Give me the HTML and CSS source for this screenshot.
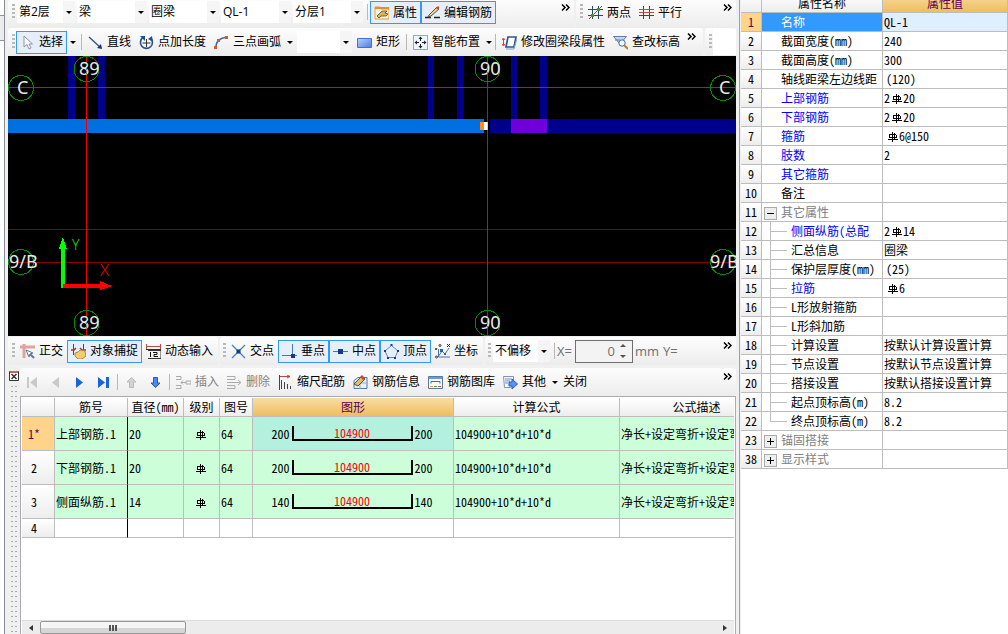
FILE: index.html
```html
<!DOCTYPE html>
<html lang="zh-CN">
<head>
<meta charset="utf-8">
<title>圈梁 - QL-1</title>
<link rel="stylesheet" href="styles.css">
</head>
<body>
<svg class="defs" aria-hidden="true">
  <symbol id="rebar" viewBox="0 0 10 10"><path d="M4.500 0v10M6.500 1v7M1.500 2v4M8.500 3v3M1 2.500h7M1 5.500h8M0 7.500h10" fill="none" stroke="#000" shape-rendering="crispEdges"/></symbol>
  <symbol id="more" viewBox="0 0 9 7"><path d="M1 .5l3 3-3 3M5 .5l3 3-3 3" fill="none" stroke="#000" stroke-width="1.500"/></symbol>
</svg>
<div class="app">
  <aside class="edge"><div class="edge-tab"></div></aside>
  <main class="work">
    <div class="row">
      <div class="bar top grow">
        <i class="grip"></i>
        <label class="combo first"><select aria-label="楼层"><option>第2层</option></select></label>
        <label class="combo"><select aria-label="构件类型"><option>梁</option></select></label>
        <label class="combo"><select aria-label="构件"><option>圈梁</option></select></label>
        <label class="combo"><select aria-label="名称"><option>QL-1</option></select></label>
        <label class="combo"><select aria-label="分层"><option>分层1</option></select></label>
        <i class="sep"></i>
        <div class="group">
        <button class="tool on"><svg viewBox="0 0 15 15"><path d="M1 2h5l1 2h8v10H1z" fill="#fff3dc" stroke="#e59a3c"/><path d="M1 3h14" stroke="#f08a28" stroke-width="2"/><path d="M3 11l3-3 2-2 5 0-2 2 3 1-2 2H7l-2 2z" fill="#d8b45c" stroke="#5f4a22" stroke-width=".8"/></svg>属性</button>
        <button class="tool on"><svg viewBox="0 0 15 15"><path d="M0 12.500h6M9 12.500h6" stroke="#222" stroke-width="1.500"/><path d="M4 10L12 2l2 2-8 7-3 1z" fill="#f0d28a" stroke="#555"/><path d="M11 3l2-2 1.500 1.500-2 2z" fill="#c05038"/></svg>编辑钢筋</button>
        </div>
        <button class="more" aria-label="更多"><svg><use href="#more"/></svg></button>
      </div>
      <div class="bar top axis">
        <i class="grip"></i>
        <div class="group">
        <button class="tool"><svg viewBox="0 0 15 15"><path d="M4.500 1v13M10.500 1v13M0 4.500h15M0 10.500h15" stroke="#33456d"/><path d="M1 14L14 1" stroke="#a83c32"/><path d="M3 9h3v3H3zM9 3h3v3H9z" fill="#3b962c"/></svg>两点</button>
        <button class="tool"><svg viewBox="0 0 15 15"><path d="M4.500 1v13M10.500 1v13M0 10.500h15" stroke="#33456d"/><path d="M0 4.500h15M0 7.500h15" stroke="#bd4a45"/></svg>平行</button>
        </div>
        <button class="more" aria-label="更多"><svg><use href="#more"/></svg></button>
      </div>
    </div>
    <div class="row">
      <div class="bar draw grow">
        <i class="grip"></i>
        <button class="tool on"><svg viewBox="0 0 15 15"><path d="M4 1v11l3-2.500 2 4.500 2-1-2-4h3.500z" fill="#fff" stroke="#8b93a5"/></svg>选择</button>
        <button class="drop" aria-label="选择方式"></button>
        <i class="sep"></i>
        <div class="group">
        <button class="tool"><svg viewBox="0 0 15 15"><path d="M1 2l12 11" stroke="#2d4f86" stroke-width="1.300"/><path d="M14 14l-1-5-4 4z" fill="#173b76"/></svg>直线</button>
        <button class="tool"><svg viewBox="0 0 15 15"><path d="M4 2.500a6 6 0 1 0 7.500.5" fill="none" stroke="#24508f" stroke-width="1.600"/><path d="M1 1h5v5zM13 1l1 6-5-3z" fill="#24508f"/><path d="M7.500 4v8M3.500 8h8" stroke="#333"/></svg>点加长度</button>
        <button class="tool"><svg viewBox="0 0 15 15"><path d="M2 13Q1 4 13 2" fill="none" stroke="#3566b1" stroke-width="1.300"/><path d="M0 11h3v3H0zM3 4h3v3H3zM11 1h3v3h-3z" fill="#d35938"/></svg>三点画弧</button>
        <button class="drop" aria-label="画弧方式"></button>
        </div>
        <label class="combo small"><select aria-label="参数"><option></option></select></label>
        <button class="tool"><svg viewBox="0 0 15 15"><defs><linearGradient id="blue" x2="1" y2="1"><stop stop-color="#b8d2ff"/><stop offset="1" stop-color="#477de4"/></linearGradient></defs><path d="M.5 3.500h14v9H.5z" fill="url(#blue)" stroke="#4473c7"/></svg>矩形</button>
        <i class="sep"></i>
        <div class="group">
        <button class="tool"><svg viewBox="0 0 15 15"><path d="M.5.5h14v14H.5z" fill="#edf5ff" stroke="#3b5b8d" stroke-dasharray="1 1"/><path d="M7.500 2v4M7.500 9v4M2 7.500h4M9 7.500h4" stroke="#222"/><path d="M5.500 4l2-2.500 2 2.500zM5.500 11l2 2.500 2-2.500zM4 5.500L1.500 7.500 4 9.500zM11 5.500l2.500 2-2.500 2z" fill="#222"/></svg>智能布置</button>
        <button class="drop" aria-label="布置方式"></button>
        </div>
        <i class="sep"></i>
        <div class="group">
        <button class="tool"><svg viewBox="0 0 15 15"><path d="M6 2h8l-2 10H4z" fill="#fff" stroke="#315687" stroke-width="1.700"/><path d="M4 14h8l3-11" fill="none" stroke="#7aa2d3"/><path d="M1.500 4v6M0 5l1.500-2L3 5M0 9l1.500 2L3 9" fill="none" stroke="#d04830"/></svg>修改圈梁段属性</button>
        <button class="tool"><svg viewBox="0 0 15 15"><path d="M.5 1.500h13L7 9zM2 5h5" fill="#c3d7f1" stroke="#5b7faf"/><circle cx="9" cy="8" r="3.200" fill="#eef7ff" stroke="#426da2"/><path d="M11 10l4 4" stroke="#bf7832" stroke-width="2"/></svg>查改标高</button>
        </div>
        <button class="more near" aria-label="更多"><svg><use href="#more"/></svg></button>
      </div>
      <div class="bar draw stub"><i class="grip"></i><span class="blank"></span></div>
    </div>

    <svg class="canvas" role="img" aria-label="轴网图">
      <g fill="#00008b"><path d="M60 0h7v63h-7zM90 0h7v63h-7zM420 0h6v63h-6zM449 0h7v63h-7zM503 0h6v63h-6zM532 0h7v63h-7z"/><rect x="482" y="63" width="100%" height="14"/></g>
      <path d="M0 63h476v14H0z" fill="#0070e0"/>
      <path d="M503 63h36v14h-36z" fill="#6f00dc"/>
      <g fill="#8b0000"><rect y="173" width="100%" height="1"/><rect y="206" width="100%" height="1"/></g>
      <g fill="#f00000"><rect y="31" width="100%" height="1"/><rect x="78" width="1" height="280"/><rect x="479" width="1" height="280"/></g>
      <path d="M472 66h4v8h-4z" fill="#ff8c20"/><path d="M476 66h3v8h-3z" fill="#fff"/><path d="M479 66h1v8h-1z" fill="#6ff"/>
      <g fill="none" stroke="#008c00">
        <circle cx="78.500" cy="13" r="12.500"/><circle cx="479.500" cy="13" r="12.500"/><circle cx="78.500" cy="267" r="12.500"/><circle cx="479.500" cy="267" r="12.500"/>
        <circle cx="13" cy="32" r="12.500"/><circle cx="715" cy="32" r="12.500"/><circle cx="13" cy="206" r="12.500"/><circle cx="715" cy="206" r="12.500"/>
      </g>
      <g class="axis-text">
        <text x="71" y="19">89</text><text x="472" y="19">90</text><text x="71" y="273">89</text><text x="472" y="273">90</text>
        <text x="9" y="38">C</text><text x="711" y="38">C</text><text x="1" y="212">9/B</text><text x="702" y="212">9/B</text>
      </g>
      <path d="M78.500 8v11M479.500 8v11M78.500 262v11M479.500 262v11" stroke="#00b4b4" stroke-dasharray="2 2"/>
      <path d="M53 232v-39h-2l4-12 4 12h-2v39z" fill="#0f0"/>
      <path d="M55 228h37v-3l12 5-12 4v-2H55z" fill="#f00"/>
      <text class="axis-y" x="64" y="194">Y</text><text class="axis-x" x="92" y="220">X</text>
    </svg>

    <div class="row snap-row">
      <div class="bar snap ortho">
        <i class="grip"></i>
        <div class="group">
        <button class="tool"><svg viewBox="0 0 15 15"><path d="M0 3h15M4 0v14" stroke="#dda5a0" stroke-width="3"/><path d="M6 6l3 7 1-3 3-1z" fill="#fff" stroke="#60789a"/><path d="M10 10l4 4" stroke="#60789a" stroke-width="2"/></svg>正交</button>
        <button class="tool on"><svg viewBox="0 0 15 15"><path d="M2.500 0v11M12.500 0v8" stroke="#77352e"/><path d="M0 6h3l2-2M15 6h-4L9 4" fill="none" stroke="#9d3b32" stroke-width="1.500"/><path d="M4 9l3-1 2-2 5 1 1 5-4 3H7l-3-3z" fill="#f0cd71" stroke="#b28a38"/></svg>对象捕捉</button>
        <button class="tool"><svg viewBox="0 0 15 15"><path d="M.5 0v5M14.500 0v5M0 2.500h15" stroke="#b64e48"/><path d="M2 6.500h13v8H2M0 5.500h15" fill="none" stroke="#333"/><path d="M4.500 8v5M7 8.500h4v2H8v2h4" fill="none" stroke="#111"/></svg>动态输入</button>
        </div>
      </div>
      <div class="bar snap points">
        <i class="grip"></i>
        <div class="group">
        <button class="tool"><svg viewBox="0 0 15 15"><path d="M1 1l13 13M14 1L1 14" stroke="#4a83c3" stroke-width="1.300"/><path d="M5.500 5.500h4v4h-4z" fill="#123d85"/></svg>交点</button>
        <button class="tool on"><svg viewBox="0 0 15 15"><path d="M10.500 0v13M0 11.500h15" stroke="#4778b5"/><path d="M9 10h4v4H9z" fill="#123d85"/></svg>垂点</button>
        <button class="tool on"><svg viewBox="0 0 15 15"><path d="M0 7.500h15" stroke="#4778b5"/><path d="M5 5h5v5H5z" fill="#123d85"/></svg>中点</button>
        <button class="tool on"><svg viewBox="0 0 15 15"><path d="M7.500 1.500L14 7l-3 6.500H4L1 7z" fill="none" stroke="#5f8bc0"/><path d="M6.500 0h2v2h-2zM0 6h2v2H0zM13 6h2v2h-2zM3 13h2v2H3zM10 13h2v2h-2z" fill="#123d85"/></svg>顶点</button>
        <button class="tool"><svg viewBox="0 0 15 15"><path d="M3.500 5v8H15M3 13l4-6 3 3 4-6" fill="none" stroke="#4a73a5"/><path d="M5 5h3v3H5zM9 9h2v2H9z" fill="#315d99"/><path d="M0 4l1 2 1-2M12 0l3 3M15 0l-3 3" fill="none" stroke="#333"/><circle cx="5" cy="1.500" r="1" fill="none" stroke="#333"/><circle cx="1.500" cy="13" r="1" fill="none" stroke="#333"/></svg>坐标</button>
        </div>
      </div>
      <div class="bar snap offset grow">
        <i class="grip"></i>
        <label class="combo offset-select"><select aria-label="偏移方式"><option>不偏移</option></select></label>
        <i class="sep"></i>
        <label class="coord" for="dx">X=</label>
        <span class="spin"><input id="dx" type="text" value="0"><span class="steps"><button class="up" aria-label="增加"></button><button class="down" aria-label="减少"></button></span></span>
        <span class="coord">mm</span><span class="coord">Y=</span>
        <button class="more" aria-label="更多"><svg><use href="#more"/></svg></button>
      </div>
    </div>

    <section class="dock">
      <div class="dock-handle">
        <button class="dock-close" aria-label="关闭面板"><svg viewBox="0 0 10 10"><path d="M.5.5h9v9h-9z" fill="#fff" stroke="#333"/><path d="M1 1h8" stroke="#c06a5c" stroke-width="2"/><path d="M2.500 3l5 5M7.500 3l-5 5" stroke="#333" stroke-width="1.500"/></svg></button>
        <i class="dots"></i>
      </div>
      <div class="dock-body">
        <div class="bar rebar-bar">
          <div class="group nav">
          <button class="tool" aria-label="首条"><svg viewBox="0 0 15 15"><path d="M3 2h2v11H3zM13 2v11L6 7.500z" fill="#c9c9c9"/></svg></button>
          <button class="tool" aria-label="上一条"><svg viewBox="0 0 15 15"><path d="M11 2v11L4 7.500z" fill="#c9c9c9"/></svg></button>
          <button class="tool" aria-label="下一条"><svg viewBox="0 0 15 15"><path d="M4 2v11l7-5.500z" fill="#1c62dc"/></svg></button>
          <button class="tool" aria-label="末条"><svg viewBox="0 0 15 15"><path d="M2 2v11l7-5.500zM10 2h3v11h-3z" fill="#1c62dc"/></svg></button>
          </div>
          <i class="sep"></i>
          <div class="group nav">
          <button class="tool" aria-label="上移"><svg viewBox="0 0 15 15"><path d="M7.500 2.500L12 7H9.500v5.500h-4V7H3z" fill="#d2d2d2" stroke="#bababa"/></svg></button>
          <button class="tool" aria-label="下移"><svg viewBox="0 0 15 15"><path d="M7.500 12.500L12 8H9.500V2.500h-4V8H3z" fill="#4c88ef" stroke="#2458be"/></svg></button>
          </div>
          <i class="sep"></i>
          <div class="group">
          <button class="tool off"><svg viewBox="0 0 15 15"><path d="M0 1.500h5v3H0M0 10.500h5v3H0M5 7.500h5M7 5.500l-2 2 2 2M10 6h5v3h-5z" fill="none" stroke="#aaa"/></svg>插入</button>
          <button class="tool off"><svg viewBox="0 0 15 15"><path d="M0 1.500h8v3H0M0 10.500h8v3H0M0 7.500h13M11 5l3 2.500-3 2.500" fill="none" stroke="#aaa"/></svg>删除</button>
          <button class="tool"><svg viewBox="0 0 15 15"><path d="M1 1.500h11M9 0l3 1.500L9 3" fill="none" stroke="#b34b40"/><path d="M1.500 0v15M3.500 5v9M6.500 7v7M9.500 9v5M12.500 11v3" stroke="#444"/></svg>缩尺配筋</button>
          <button class="tool"><svg viewBox="0 0 15 15"><path d="M5 2.500h9v11H1v-8z" fill="#e6effc" stroke="#5578ae"/><path d="M1 8h13M7 5v9" stroke="#8fabd3"/><path d="M1 9l8-8 3 3-7 7z" fill="#ddc16a" stroke="#5d4b29"/><path d="M7 2l2-2 3 3-2 2z" fill="#be4c37"/></svg>钢筋信息</button>
          <button class="tool"><svg viewBox="0 0 15 15"><path d="M.5 1.500h14v12H.5z" fill="#f5f9ff" stroke="#5679a9"/><path d="M1 3h13" stroke="#6f9bd0" stroke-width="2"/><path d="M3 8.500v-2h9v2" fill="none" stroke="#476898"/><path d="M2 11.500h3" stroke="#df9c37"/><path d="M6 11.500h3" stroke="#46a34a"/><path d="M10 11.500h3" stroke="#cc5449"/></svg>钢筋图库</button>
          <button class="tool"><svg viewBox="0 0 15 15"><path d="M.5 1.500h10v8l-3 3h-6z" fill="#f5f9ff" stroke="#7e94b4"/><path d="M2 4h7M2 6h5M2 8h3" stroke="#7192be"/><path d="M6 7h3V4l5.500 5L9 14v-3H6z" fill="#5b93ed" stroke="#2a5cb5"/></svg>其他</button>
          <button class="drop" aria-label="其他操作"></button>
          <button class="tool close">关闭</button>
          </div>
          <button class="more" aria-label="更多"><svg><use href="#more"/></svg></button>
        </div>
        <div class="sheet">
          <div class="sheet-view">
          <table class="rebars">
            <colgroup><col class="c-id"><col class="c-name"><col class="c-dia"><col class="c-level"><col class="c-fig"><col class="c-shape"><col class="c-formula"><col class="c-desc"></colgroup>
            <thead><tr><th></th><th>筋号</th><th>直径(mm)</th><th>级别</th><th>图号</th><th class="hot">图形</th><th>计算公式</th><th>公式描述</th></tr></thead>
            <tbody>
            <tr><th class="active">1*</th><td>上部钢筋.1</td><td>20</td><td class="mid"><svg class="rb"><use href="#rebar"/></svg></td><td>64</td><td class="figure picked"><div class="shape"><span>200</span><b>104900</b><span>200</span></div></td><td>104900+10*d+10*d</td><td>净长+设定弯折+设定弯</td></tr>
            <tr><th>2</th><td>下部钢筋.1</td><td>20</td><td class="mid"><svg class="rb"><use href="#rebar"/></svg></td><td>64</td><td class="figure"><div class="shape"><span>200</span><b>104900</b><span>200</span></div></td><td>104900+10*d+10*d</td><td>净长+设定弯折+设定弯</td></tr>
            <tr><th>3</th><td>侧面纵筋.1</td><td>14</td><td class="mid"><svg class="rb"><use href="#rebar"/></svg></td><td>64</td><td class="figure"><div class="shape"><span>140</span><b>104900</b><span>140</span></div></td><td>104900+10*d+10*d</td><td>净长+设定弯折+设定弯</td></tr>
            <tr class="empty"><th>4</th><td></td><td></td><td></td><td></td><td></td><td></td><td></td></tr>
            </tbody>
          </table>
          </div>
          <div class="scroll"><button class="left" aria-label="向左滚动"></button><div class="track"><div class="thumb"><i></i></div></div><button class="right" aria-label="向右滚动"></button></div>
        </div>
      </div>
    </section>
  </main>

  <aside class="props">
    <table>
      <colgroup><col class="p-id"><col class="p-name"><col></colgroup>
      <thead><tr><th></th><th>属性名称</th><th class="hot">属性值</th></tr></thead>
      <tbody>
      <tr class="selected"><th>1</th><td>名称</td><td>QL-1</td></tr>
      <tr><th>2</th><td>截面宽度(mm)</td><td>240</td></tr>
      <tr><th>3</th><td>截面高度(mm)</td><td>300</td></tr>
      <tr><th>4</th><td>轴线距梁左边线距</td><td class="inset">(120)</td></tr>
      <tr class="link"><th>5</th><td>上部钢筋</td><td>2<svg class="rb"><use href="#rebar"/></svg>20</td></tr>
      <tr class="link"><th>6</th><td>下部钢筋</td><td>2<svg class="rb"><use href="#rebar"/></svg>20</td></tr>
      <tr class="link"><th>7</th><td>箍筋</td><td class="inset"><svg class="rb"><use href="#rebar"/></svg>6@150</td></tr>
      <tr class="link"><th>8</th><td>肢数</td><td>2</td></tr>
      <tr class="link"><th>9</th><td>其它箍筋</td><td></td></tr>
      <tr><th>10</th><td>备注</td><td></td></tr>
      <tr class="fold"><th>11</th><td><button class="toggle open" aria-label="收起"></button>其它属性</td><td></td></tr>
      <tr class="child link"><th>12</th><td>侧面纵筋(总配</td><td>2<svg class="rb"><use href="#rebar"/></svg>14</td></tr>
      <tr class="child"><th>13</th><td>汇总信息</td><td>圈梁</td></tr>
      <tr class="child"><th>14</th><td>保护层厚度(mm)</td><td class="inset">(25)</td></tr>
      <tr class="child link"><th>15</th><td>拉筋</td><td class="inset"><svg class="rb"><use href="#rebar"/></svg>6</td></tr>
      <tr class="child"><th>16</th><td>L形放射箍筋</td><td></td></tr>
      <tr class="child"><th>17</th><td>L形斜加筋</td><td></td></tr>
      <tr class="child"><th>18</th><td>计算设置</td><td>按默认计算设置计算</td></tr>
      <tr class="child"><th>19</th><td>节点设置</td><td>按默认节点设置计算</td></tr>
      <tr class="child"><th>20</th><td>搭接设置</td><td>按默认搭接设置计算</td></tr>
      <tr class="child"><th>21</th><td>起点顶标高(m)</td><td>8.2</td></tr>
      <tr class="child last"><th>22</th><td>终点顶标高(m)</td><td>8.2</td></tr>
      <tr class="fold"><th>23</th><td><button class="toggle" aria-label="展开"></button>锚固搭接</td><td></td></tr>
      <tr class="fold"><th>38</th><td><button class="toggle" aria-label="展开"></button>显示样式</td><td></td></tr>
      </tbody>
    </table>
  </aside>
</div>
</body>
</html>
```
FILE: styles.css
```css
* { box-sizing: border-box; }
body { margin: 0; background: #f0f0f0; color: #000; font: 12px/16px "Open Sans", "Noto Sans CJK SC", sans-serif; }
button, select, input { font: inherit; color: inherit; }
button { border: 0; padding: 0; background: none; }
.defs { position: absolute; width: 0; height: 0; }
.app { display: grid; grid-template-columns: 8px minmax(0, 1fr) 268px; height: 100vh; overflow: hidden; }

.edge { padding-top: 15px; margin-right: 3px; background: #fff; border-right: 1px solid #868b94; }
.edge-tab { height: 26px; background: #ececec; border: solid #8e929a; border-width: 1px 0; }
.work { display: flex; flex-direction: column; min-width: 0; padding-right: 3px; border-right: 1px solid #a0a0a0; }

/* toolbars */
.row { display: flex; gap: 2px; }
.bar { display: flex; align-items: center; height: 28px; background: linear-gradient(#fdfdfd, #ececec); border-radius: 3px; white-space: nowrap; }
.grow { flex: 1; min-width: 0; }
.group { display: flex; align-items: center; }
.top { align-items: flex-start; padding-top: 1px; }
.grip { flex: none; width: 3px; height: 16px; margin: 0 2px 0 4px; background: repeating-linear-gradient(#b9b9b9 0 2px, transparent 2px 4px); }
.top .grip { margin-top: 3px; }
.sep { flex: none; width: 1px; height: 16px; background: #b8b8b8; margin: 0 2px; }
.top .sep { margin: 3px 2px 0; }
.combo { position: relative; flex: none; width: 70px; height: 22px; margin-right: 2px; background: linear-gradient(90deg, #fff calc(100% - 12px), #f5f5f5 0); }
.combo::after { content: ""; position: absolute; right: 3px; top: 10px; border: 3px solid transparent; border-top-color: #000; border-bottom: 0; pointer-events: none; }
.combo select { appearance: none; width: 100%; height: 100%; border: 0; padding: 0 14px 0 2px; background: none; outline: 0; }
.combo.first { width: 58px; }
.tool { display: flex; flex: none; align-items: center; gap: 4px; height: 23px; padding: 0 3px; border: 1px solid transparent; }
.tool svg { width: 15px; height: 15px; }
.tool.on { background: #e5eef9; border-color: #3399ff; }
.tool.off { color: #838383; }
.drop { flex: none; width: 9px; height: 20px; }
.drop::after { content: ""; display: block; width: 0; margin: 0 auto; border: 3px solid transparent; border-top-color: #000; border-bottom: 0; }
.more { flex: none; width: 9px; height: 12px; margin: 0 4px 12px auto; line-height: 0; }
.more svg { width: 9px; height: 7px; }
.axis { width: 160px; }
.axis .grip { margin-right: 1px; }
.more.near { margin-left: 3px; margin-right: 0; }
.draw .grip { margin-right: 1px; }
.draw > .drop { margin: 0 2px 0 1px; }
.combo.small { width: 55px; margin: 0 1px 0 3px; }
.stub { width: 31px; }
.blank { flex: 1; height: 26px; background: #fff; }

.canvas { display: block; flex: none; width: 100%; height: 280px; background: #000; shape-rendering: crispEdges; }
.axis-text { font: 18px "Noto Sans", sans-serif; fill: #e8e8e8; }
.axis-y { font: 300 14px "Open Sans", sans-serif; fill: #0f0; }
.axis-x { font: 300 17px "Open Sans", sans-serif; fill: #f00; }

.snap-row { padding: 1px 0; }
.snap .grip { margin-right: 0; }
.snap.ortho { width: 210px; }
.ortho .grip { margin-right: 1px; }
.points { width: 263px; }
.points .grip { margin: 0 1px 0 3px; }
.offset .grip { margin: 0 2px 0 3px; }
.offset-select { width: 57px; }
.coord { color: #707070; font-size: 13px; margin-right: 4px; }
.spin { display: flex; flex: none; width: 58px; height: 23px; margin: 0 2px 0 -1px; border: 1px solid #707070; background: #f3f3f3; }
.spin input { width: 39px; border: 0; padding: 0; background: none; color: #707070; text-align: right; font-size: 13px; }
.steps { display: flex; flex: 1; flex-direction: column; align-items: center; justify-content: space-around; }
.steps button { border: 3px solid transparent; width: 0; height: 0; }
.steps .up { border-bottom-color: #555; border-top: 0; }
.steps .down { border-top-color: #555; border-bottom: 0; }

/* rebar editor */
.dock { display: flex; flex: 1; min-height: 0; padding-top: 2px; }
.dock-handle { display: flex; flex-direction: column; width: 12px; padding-top: 2px; }
.dock-close { width: 10px; height: 11px; margin-left: 1px; line-height: 0; }
.dock-close svg { width: 10px; height: 10px; }
.dots { flex: 1; width: 8px; margin: 3px 0 0 2px; background: radial-gradient(circle, #aaa 1px, transparent 1px) 0 0 / 4px 5px; }
.dock-body { display: flex; flex: 1; flex-direction: column; min-width: 0; }
.rebar-bar .nav { gap: 1px; }
.sheet { display: flex; flex: 1; flex-direction: column; min-height: 0; border: 1px solid #a9abb2; border-bottom: 0; background: #fff; padding: 1px 1px 0; }
.sheet-view { flex: 1; min-height: 0; overflow: hidden; }
table { table-layout: fixed; border-collapse: separate; border-spacing: 0; font: 12px/16px "Noto Sans Mono CJK SC", "Noto Sans CJK SC", monospace; white-space: nowrap; }
th, td { height: 19px; padding: 0; border: solid #bdbdbd; border-width: 0 1px 1px 0; overflow: hidden; font-weight: 400; text-align: left; }
th { background: linear-gradient(#fff, #ededed); text-align: center; }
th.hot { background: linear-gradient(#f9dca4, #f0bd5c); color: #5a0050; }
.rebars { width: 752px; }
.c-id { width: 33px; } .c-name { width: 73px; } .c-dia { width: 56px; } .c-level { width: 36px; }
.c-fig { width: 33px; } .c-shape { width: 201px; } .c-formula { width: 166px; } .c-desc { width: 154px; }
.rebars tbody tr { height: 34px; }
.rebars tbody tr.empty { height: 19px; }
.rebars tbody th { padding-right: 8px; }
.rebars td { padding-left: 1px; background: #ccffd9; }
.rebars .empty td { background: #fff; }
.rebars td:nth-child(2) { border-right-color: #000; }
.rebars td.mid { padding: 0 2px 0 0; text-align: center; }
.rebars td.figure { padding: 0 2px 0 0; }
.rebars td.picked { background: #b4f0de; }
.rebars th.active { background: #ffd38a; color: #5a0050; }
.rb { width: 10px; height: 10px; margin: 0 1px 0 2px; vertical-align: -1px; }
.shape { display: flex; align-items: center; justify-content: center; gap: 2px; }
.shape b { width: 121px; height: 15px; border: solid #000; border-width: 0 2px 2px; color: #f00; font-weight: 400; line-height: 14px; text-align: center; }

.scroll { display: flex; height: 14px; background: #ececec; border-top: 1px solid #ddd; }
.scroll button { width: 18px; }
.scroll button::after { content: ""; display: block; width: 0; margin: auto; border: 3px solid transparent; }
.scroll .left::after { border-right: 4px solid #333; border-left: 0; }
.scroll .right::after { border-left: 4px solid #333; border-right: 0; }
.track { flex: 1; }
.thumb { display: flex; align-items: center; justify-content: center; width: 146px; height: 100%; border: 1px solid #999; border-radius: 2px; background: linear-gradient(#f5f5f5 50%, #d6d6d6 50%); }
.thumb i { width: 8px; height: 6px; background: repeating-linear-gradient(90deg, #555 0 2px, transparent 2px 3px); }

/* property list */
.props { overflow: hidden; margin-left: 1px; background: #fff; }
.props table { width: 100%; margin-top: -6px; }
.p-id { width: 21px; } .p-name { width: 121px; }
.props td:nth-child(2) { padding-left: 19px; }
.props td:nth-child(3) { padding-left: 1px; }
.props td.inset:nth-child(3) { padding-left: 3px; }
.props .link td:nth-child(2) { color: #00f; }
.props .selected th { background: #ffd38a; color: #5a0050; }
.props .selected td { background: #dfefff; }
.props .selected td:nth-child(2) { background: #3399ff; color: #fff; }
.props .fold td:nth-child(2) { padding-left: 2px; color: #808080; }
.toggle { width: 13px; height: 13px; margin-right: 4px; border: 1px solid #aaa; vertical-align: -2px; background: linear-gradient(#000, #000) center / 7px 1px no-repeat, linear-gradient(#000, #000) center / 1px 7px no-repeat, #eee; }
.toggle.open { background: linear-gradient(#000, #000) center / 7px 1px no-repeat, #eee; }
.props .child td:nth-child(2) { padding-left: 29px; background: linear-gradient(#bdbdbd, #bdbdbd) 8px 0 / 1px 100% no-repeat, linear-gradient(#bdbdbd, #bdbdbd) 8px 9px / 17px 1px no-repeat; }
.props .last td:nth-child(2) { background-size: 1px 10px, 17px 1px; }
```
